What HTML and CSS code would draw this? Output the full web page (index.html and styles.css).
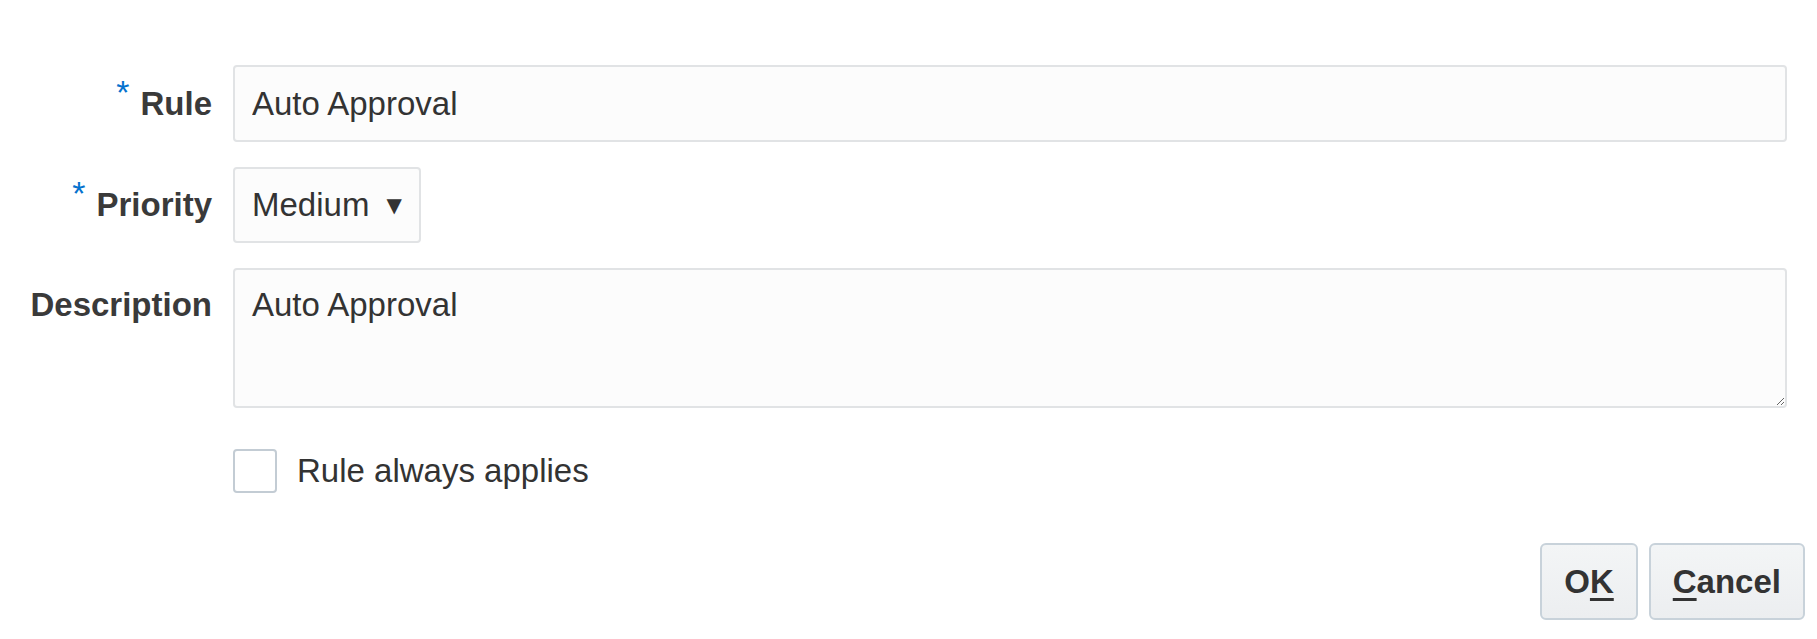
FILE: index.html
```html
<!DOCTYPE html>
<html lang="en">
<head>
   <meta charset="utf-8">
   <title>Edit Rule</title>
   <link rel="stylesheet" href="styles.css">
</head>
<body>
   <div id="dialog">
      <form class="rule-form">
         <label class="field-label" for="rule"><span class="req">*</span>Rule</label>
         <input type="text" id="rule" class="text-input" value="Auto Approval">

         <label class="field-label" for="priority"><span class="req">*</span>Priority</label>
         <div class="field-cell">
            <div class="choice" id="priority">
               <span>Medium</span>
               <span class="arrow">&#9660;</span>
            </div>
         </div>

         <label class="field-label label-top" for="desc">Description</label>
         <textarea id="desc" class="text-area">Auto Approval</textarea>

         <div></div>
         <label class="check-row">
            <span class="check-box"></span>
            <span>Rule always applies</span>
         </label>
      </form>
      <div class="buttons">
         <button type="button" class="btn">O<u>K</u></button>
         <button type="button" class="btn"><u>C</u>ancel</button>
      </div>
   </div>
</body>
</html>
```

FILE: styles.css
```css
* {
    margin: 0;
    padding: 0;
    box-sizing: border-box;
}
body {
    background: #fff;
    font-family: "Liberation Sans", Arial, sans-serif;
    font-size: 33px;
    color: #333;
}
#dialog {
    width: 1817px;
    height: 639px;
    padding: 65px 12px 0 0;
}
.rule-form {
    display: grid;
    grid-template-columns: 212px 1fr;
    column-gap: 21px;
    row-gap: 25px;
    align-items: center;
    margin-right: 18px;
}
.field-label {
    text-align: right;
    font-weight: bold;
    color: #3a3a3a;
    white-space: nowrap;
}
.label-top {
    align-self: start;
    padding-top: 18px;
}
.req {
    color: #0572ce;
    font-size: 34px;
    font-weight: normal;
    line-height: 0;
    position: relative;
    top: -11px;
    margin-right: 11px;
}
.text-input,
.text-area,
.choice {
    font-family: inherit;
    font-size: 33px;
    color: #333;
    background: #fcfcfc;
    border: 2px solid #e1e3e5;
    border-radius: 4px;
    outline: 0;
}
.text-input {
    height: 77px;
    padding: 0 17px;
}
.choice {
    width: 188px;
    height: 76px;
    display: flex;
    align-items: center;
    padding: 0 17px;
    gap: 17px;
}
.arrow {
    font-family: "DejaVu Sans", sans-serif;
    font-size: 20px;
    color: #333;
}
.text-area {
    height: 140px;
    padding: 16px 17px;
    line-height: 38px;
    resize: both;
}
.check-row {
    display: flex;
    align-items: center;
    gap: 20px;
    margin-top: 16px;
}
.check-box {
    width: 44px;
    height: 44px;
    border: 2px solid #c3ccd4;
    border-radius: 4px;
    background: #fff;
}
.buttons {
    display: flex;
    justify-content: flex-end;
    gap: 11px;
    margin-top: 50px;
}
.btn {
    height: 77px;
    padding: 0 22px;
    font-family: inherit;
    font-size: 33px;
    font-weight: bold;
    color: #333;
    background: linear-gradient(#f3f5f6, #eceef0);
    border: 2px solid #c8d2da;
    border-radius: 6px;
    cursor: pointer;
}
.btn u {
    text-decoration-thickness: 3px;
    text-underline-offset: 5px;
}
```
